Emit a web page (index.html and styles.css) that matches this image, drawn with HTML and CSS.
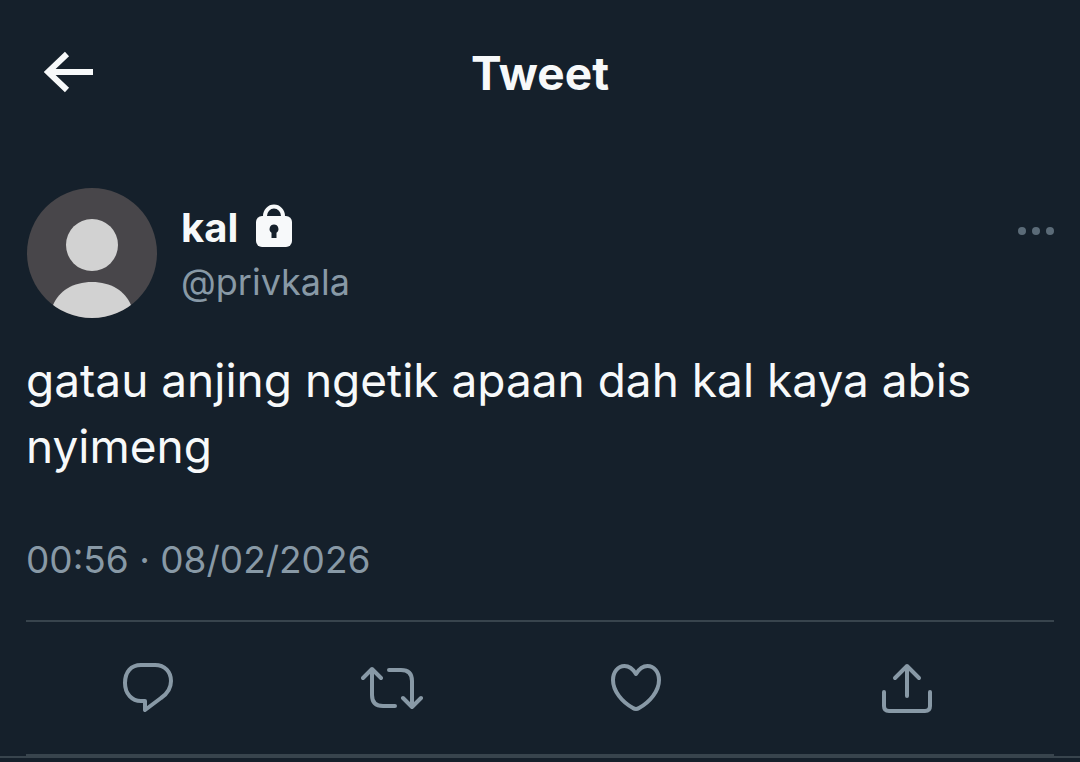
FILE: index.html
```html
<!DOCTYPE html>
<html lang="id">
<head>
  <meta charset="UTF-8">
  <meta name="viewport" content="width=device-width, initial-scale=1">
  <title>Tweet</title>
  <link rel="stylesheet" href="styles.css">
</head>
<body>
  <header class="top-bar">
    <button type="button" class="icon-button back-button" aria-label="Back">
      <svg width="50" height="42" viewBox="0 0 50 42" fill="none" stroke="currentColor" stroke-width="6">
        <path d="M23 3 4 21l19 18M5 21h44"/>
      </svg>
    </button>
    <h1 class="top-title">Tweet</h1>
  </header>

  <main>
    <article class="tweet">
      <div class="tweet-author">
        <svg class="avatar" viewBox="0 0 130 130">
          <clipPath id="avatarClip"><circle cx="65" cy="65" r="65"/></clipPath>
          <g clip-path="url(#avatarClip)">
            <path fill="#48464a" d="M0 0h130v130H0z"/>
            <circle cx="65" cy="57" r="26" fill="#d2d2d2"/>
            <path fill="#d2d2d2" d="M26 117C32 103 46 94 65 94s33 9 39 23v13H26z"/>
          </g>
        </svg>
        <div class="author-names">
          <div class="author-name">
            <span>kal</span>
            <svg class="lock-icon" width="36" height="43" viewBox="0 0 36 43">
              <path fill="none" stroke="currentColor" stroke-width="4" d="M9 14v-2a9 9.500 0 0 1 18 0v2"/>
              <rect y="12" width="36" height="31" rx="6" fill="currentColor"/>
              <path fill="#15202b" d="M18 20.500a4.500 4.500 0 0 0-2.500 8.200V34h5v-5.300A4.500 4.500 0 0 0 18 20.500z"/>
            </svg>
          </div>
          <div class="author-handle">@privkala</div>
        </div>
        <button type="button" class="icon-button more-button" aria-label="More">
          <svg width="36" height="8" viewBox="0 0 36 8" fill="currentColor">
            <circle cx="4" cy="4" r="4"/>
            <circle cx="18" cy="4" r="4"/>
            <circle cx="32" cy="4" r="4"/>
          </svg>
        </button>
      </div>

      <p class="tweet-text">gatau anjing ngetik apaan dah kal kaya abis nyimeng</p>
      <time class="tweet-date" datetime="2026-02-08T00:56">00:56 · 08/02/2026</time>

      <div class="tweet-actions">
        <button type="button" class="icon-button" aria-label="Reply">
          <svg width="50" height="50" viewBox="0 0 50 50">
            <path d="M18 2h14c10 0 16 7 16 16 0 8-4 13-10 17L22 47V38h-4C9 38 2 31 2 20S8 2 18 2z"/>
          </svg>
        </button>
        <button type="button" class="icon-button" aria-label="Retweet">
          <svg width="62" height="50" viewBox="0 0 62 50">
            <path d="M2 15 11 6l9 9M11 6v26q0 11 11 11h12M28 7h12q11 0 11 11v26M42 35l9 9 9-9"/>
          </svg>
        </button>
        <button type="button" class="icon-button" aria-label="Like">
          <svg width="50" height="50" viewBox="0 0 50 50">
            <path d="M25 11C22 6 18 3 13.500 3 7 3 2 9 2 17c0 11 9 22 20 28q3 2 6 0c11-6 20-17 20-28 0-8-5-14-11.500-14C32 3 28 6 25 11z"/>
          </svg>
        </button>
        <button type="button" class="icon-button share-button" aria-label="Share">
          <svg width="50" height="50" viewBox="0 0 50 50">
            <path d="M2 29v14q0 5 5 5h36q5 0 5-5V29M25 33V3M13 15 25 3l12 12"/>
          </svg>
        </button>
      </div>
    </article>
  </main>
</body>
</html>
```

FILE: styles.css
```css
* {
  box-sizing: border-box;
}

body {
  margin: 0;
  background-color: #15202b;
  color: #f7f9fa;
  font-family: Inter, "Liberation Sans", sans-serif;
}

.icon-button {
  display: flex;
  padding: 0;
  border: none;
  background: none;
  color: #8899a6;
  cursor: pointer;
}

.top-bar {
  display: grid;
  grid-template-columns: 1fr auto 1fr;
  align-items: center;
  height: 144px;
  padding: 0 44px;
}

.back-button {
  justify-self: start;
  color: #f7f9fa;
}

.top-title {
  margin: 0;
  padding-top: 2px;
  font-size: 46px;
  font-weight: 700;
}

.tweet {
  padding: 44px 26px 0;
  border-bottom: 2px solid #38444d;
}

.tweet-author {
  display: flex;
  align-items: center;
  gap: 24px;
  padding-left: 1px;
}

.avatar {
  width: 130px;
  height: 130px;
}

.author-names {
  flex: 1;
  padding-top: 4px;
}

.author-name {
  display: flex;
  align-items: center;
  gap: 18px;
  font-size: 40px;
  font-weight: 700;
  line-height: 54px;
}

.lock-icon {
  margin-bottom: 6px;
}

.author-handle {
  color: #8899a6;
  font-size: 36px;
  line-height: 54px;
}

.more-button {
  align-self: flex-start;
  padding: 39px 0;
  color: #5b6b78;
}

.tweet-text {
  margin: 29px 0 54px;
  font-size: 46px;
  line-height: 66px;
}

.tweet-date {
  display: block;
  padding-bottom: 33px;
  border-bottom: 2px solid #38444d;
  color: #8899a6;
  font-size: 37px;
  line-height: 54px;
}

.tweet-actions {
  display: flex;
  gap: 188px;
  padding: 41px 122px 41px 97px;
  border-bottom: 2px solid #38444d;
}

.tweet-actions svg {
  fill: none;
  stroke: currentColor;
  stroke-width: 4;
  stroke-linecap: round;
  stroke-linejoin: round;
}

.share-button {
  margin-left: auto;
}
```
